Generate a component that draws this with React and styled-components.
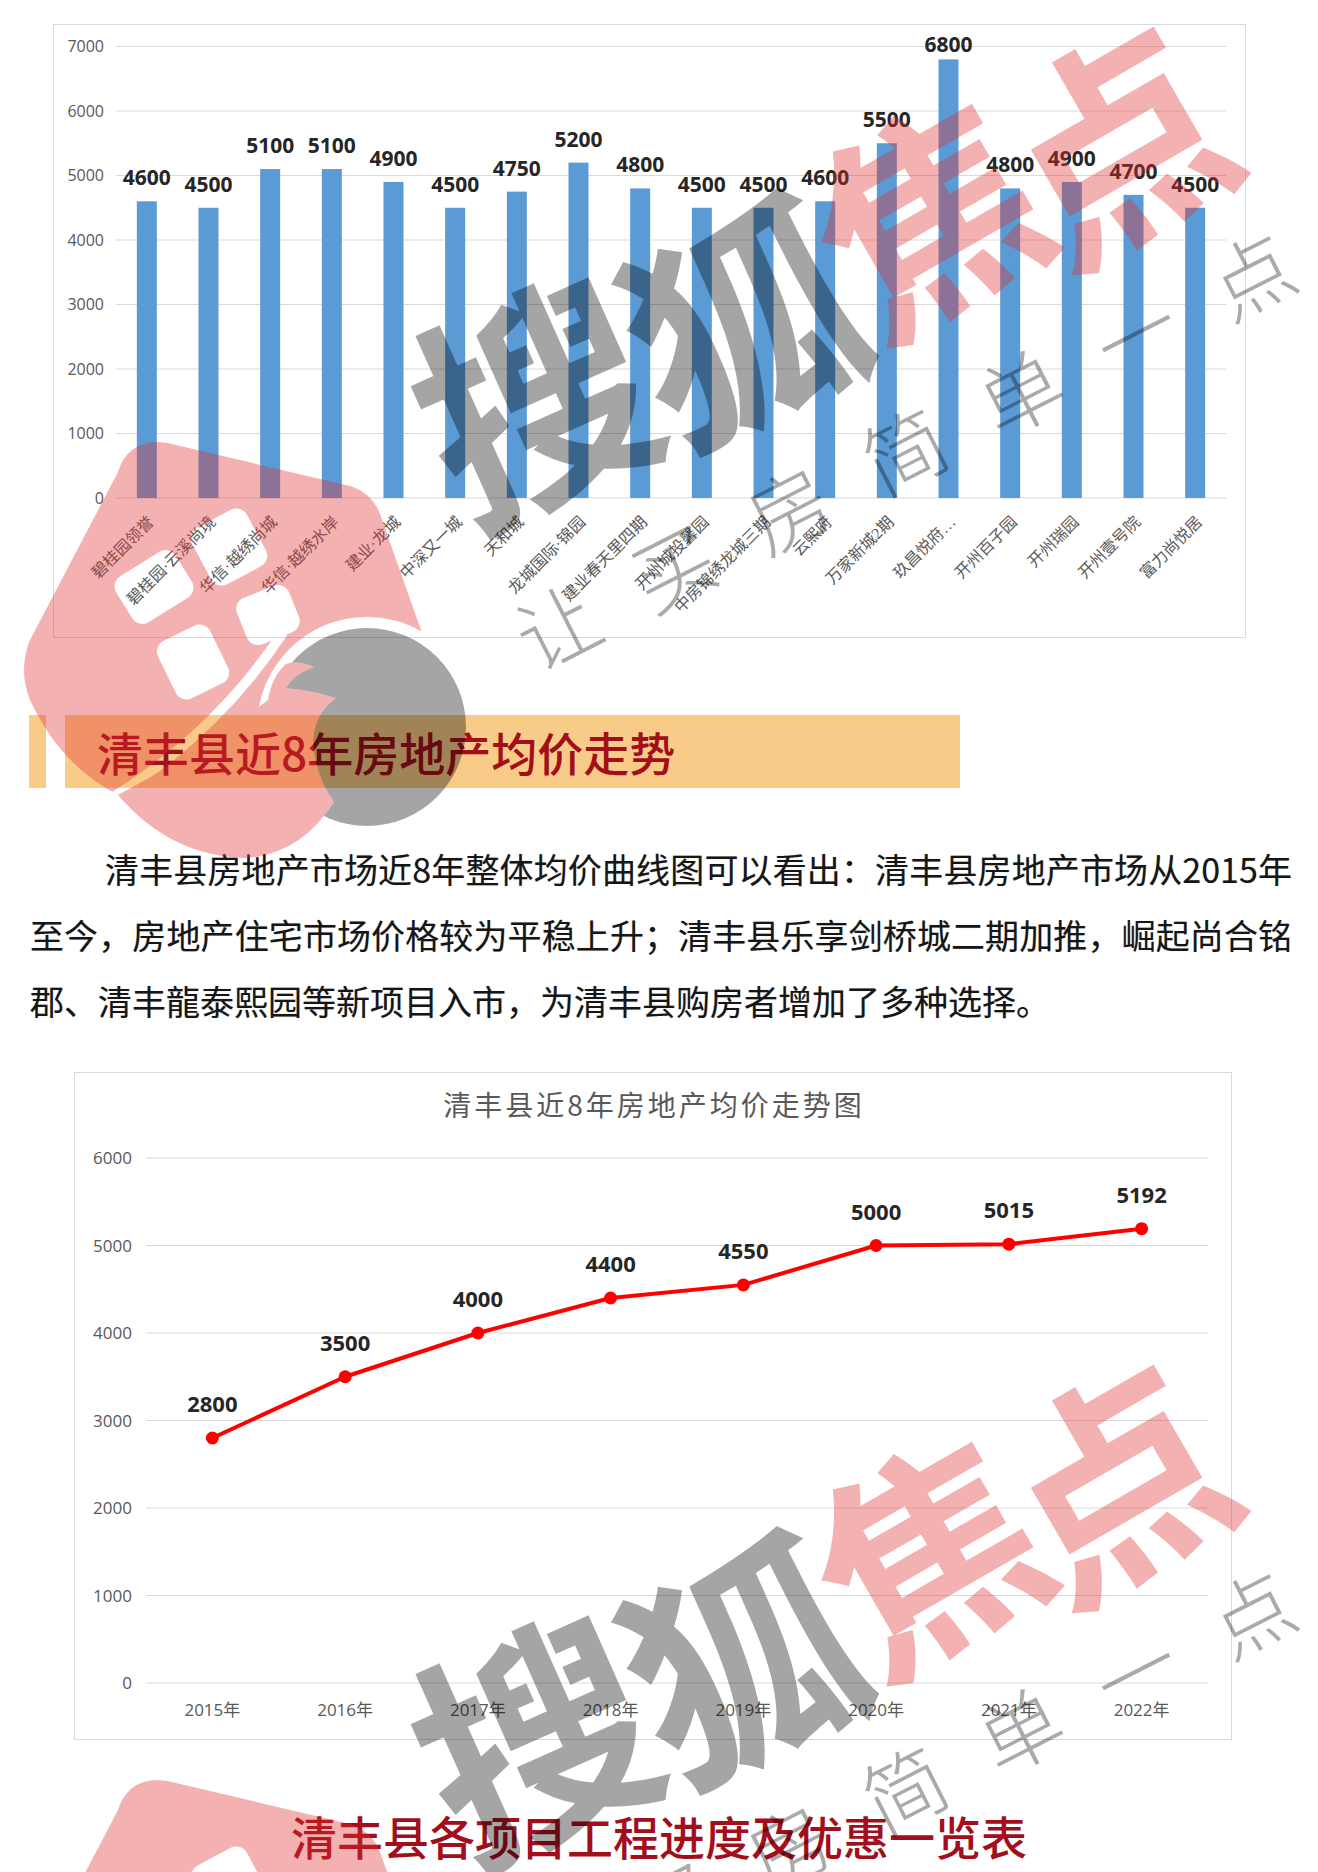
import React from "react";
import styled, { createGlobalStyle } from "styled-components";

const GlobalStyle = createGlobalStyle`
  html, body {
    margin: 0;
    padding: 0;
    background: #ffffff;
  }
  body {
    font-family: "Noto Sans CJK SC", "Open Sans", sans-serif;
    color: #1a1a1a;
  }
`;

const CJK = `"Noto Sans CJK SC", "Noto Sans", sans-serif`;
const NUM = `"Open Sans", "Noto Sans CJK SC", sans-serif`;

const Page = styled.div`
  position: relative;
  width: 1318px;
  height: 1872px;
  overflow: hidden;
  background: #fff;
`;

const ChartBox = styled.div`
  box-sizing: border-box;
  width: ${(p) => p.$w}px;
  height: ${(p) => p.$h}px;
  margin: ${(p) => p.$top}px 0 0 ${(p) => p.$left}px;
  border: 1px solid #d9d9d9;
  background: #fff;

  svg {
    display: block;
  }
`;

const GridLine = styled.line`
  stroke: #d9d9d9;
  stroke-width: 1;
`;

const TickText = styled.text`
  font-family: ${NUM};
  font-size: ${(p) => p.$size || 16}px;
  fill: #595959;
  text-anchor: ${(p) => p.$anchor || "end"};
`;

const CategoryText = styled.text`
  font-family: "Liberation Serif", "Noto Sans CJK SC", serif;
  font-size: 16px;
  fill: #595959;
  text-anchor: end;
`;

const ValueText = styled.text`
  font-family: ${NUM};
  font-weight: 700;
  font-size: ${(p) => p.$size || 21}px;
  fill: #262626;
  text-anchor: middle;
`;

const ChartTitle = styled.text`
  font-family: ${CJK};
  font-size: 28px;
  letter-spacing: 3px;
  fill: #595959;
  text-anchor: middle;
`;

const HeadingRow = styled.div`
  display: flex;
  gap: 19px;
  height: 73px;
  margin: 77px 0 0 29px;
`;

const HeadingStripe = styled.div`
  width: 17px;
  background: #f9cb89;
`;

const HeadingBar = styled.div`
  width: 895px;
  background: #f9cb89;
  display: flex;
  align-items: center;
  padding-left: 32px;
  box-sizing: border-box;
`;

const HeadingText = styled.h2`
  margin: 0;
  font-family: ${CJK};
  font-weight: 500;
  font-size: 46px;
  line-height: 55px;
  color: #a20e1b;
  text-align: ${(p) => p.$align || "left"};
`;

const Paragraph = styled.p`
  box-sizing: border-box;
  width: 1262px;
  margin: 48px 0 0 30px;
  font-family: ${CJK};
  font-size: 34px;
  line-height: 66px;
  text-indent: 75px;
  text-align: justify;
  color: #161616;
  text-shadow: 0 0 1px rgba(0, 0, 0, 0.3);
`;

const BottomHeading = styled.div`
  margin-top: 68px;
`;

const Overlay = styled.svg`
  position: absolute;
  left: 0;
  top: ${(p) => p.$top}px;
  pointer-events: none;
`;

const MarkText = styled.text`
  font-family: ${CJK};
  font-size: ${(p) => p.$size}px;
  font-weight: ${(p) => p.$weight};
  fill: ${(p) => p.$fill};
  opacity: ${(p) => p.$alpha};
  text-anchor: middle;
  dominant-baseline: central;
`;

const bars = [
  ["碧桂园领誉", 4600],
  ["碧桂园·云溪尚境", 4500],
  ["华信·越绣尚城", 5100],
  ["华信·越绣水岸", 5100],
  ["建业·龙城", 4900],
  ["中深又一城", 4500],
  ["天和城", 4750],
  ["龙城国际·锦园", 5200],
  ["建业春天里四期", 4800],
  ["开州城投馨园", 4500],
  ["中房锦绣龙城三期", 4500],
  ["云熙府", 4600],
  ["万家新城2期", 5500],
  ["玖昌悦府…", 6800],
  ["开州百子园", 4800],
  ["开州瑞园", 4900],
  ["开州壹号院", 4700],
  ["富力尚悦居", 4500],
];

const trend = [
  ["2015年", 2800],
  ["2016年", 3500],
  ["2017年", 4000],
  ["2018年", 4400],
  ["2019年", 4550],
  ["2020年", 5000],
  ["2021年", 5015],
  ["2022年", 5192],
];

const BarChart = () => {
  const left = 62;
  const width = 1110;
  const zero = 473;
  const scale = 451.5 / 7000;
  const step = width / bars.length;
  const ticks = [0, 1000, 2000, 3000, 4000, 5000, 6000, 7000];

  return (
    <ChartBox $w={1193} $h={614} $top={24} $left={53}>
      <svg width="1191" height="612">
        {ticks.map((t) => {
          const y = zero - t * scale;
          return (
            <g key={t}>
              <GridLine x1={left} x2={left + width} y1={y} y2={y} />
              <TickText x={50} y={y + 5.5}>
                {t}
              </TickText>
            </g>
          );
        })}
        {bars.map(([name, v], i) => {
          const cx = left + step * (i + 0.5);
          const top = zero - v * scale;
          return (
            <g key={name}>
              <rect x={cx - 10} y={top} width="20" height={zero - top} fill="#5b9bd5" />
              <ValueText x={cx} y={Math.max(top - 16, 27)}>
                {v}
              </ValueText>
              <CategoryText transform={`translate(${cx + 8} ${zero + 25}) rotate(-45)`}>
                {name}
              </CategoryText>
            </g>
          );
        })}
      </svg>
    </ChartBox>
  );
};

const LineChart = () => {
  const left = 71;
  const width = 1062;
  const zero = 610;
  const scale = 87.5 / 1000;
  const step = width / trend.length;
  const ticks = [0, 1000, 2000, 3000, 4000, 5000, 6000];
  const pts = trend.map(([, v], i) => [left + step * (i + 0.5), zero - v * scale]);

  return (
    <ChartBox $w={1158} $h={668} $top={38} $left={74}>
      <svg width="1156" height="666">
        <ChartTitle x={579} y={43}>
          清丰县近8年房地产均价走势图
        </ChartTitle>
        {ticks.map((t) => {
          const y = zero - t * scale;
          return (
            <g key={t}>
              <GridLine x1={left} x2={left + width} y1={y} y2={y} />
              <TickText x={57} y={y + 6} $size={17}>
                {t}
              </TickText>
            </g>
          );
        })}
        <polyline
          points={pts.map((p) => p.join(",")).join(" ")}
          fill="none"
          stroke="#ff0000"
          strokeWidth="4"
          strokeLinejoin="round"
        />
        {pts.map(([x, y], i) => (
          <g key={trend[i][0]}>
            <circle cx={x} cy={y} r="6.5" fill="#ff0000" />
            <ValueText x={x} y={y - 26} $size={22}>
              {trend[i][1]}
            </ValueText>
            <TickText x={x} y={643} $size={17} $anchor="middle">
              {trend[i][0]}
            </TickText>
          </g>
        ))}
      </svg>
    </ChartBox>
  );
};

// white windows of the logo: cx, cy, w, h, angle
const windows = [
  [154, 587, 70, 54, -32],
  [229, 547, 62, 64, -28],
  [193, 662, 58, 64, -26],
  [268, 615, 56, 50, -22],
];

const FLAME =
  "M118 795 Q205 748 268 700 Q272 676 286 664 Q298 660 314 667 Q294 674 286 688 Q310 690 336 698 Q314 714 313 742 Q315 775 334 802 Q300 855 245 858 Q170 856 118 795 Z";

const slogan = "让买房简单一点".split("");

const Watermark = ({ top, id }) => (
  <Overlay $top={top} width="1318" height="1338" viewBox="0 0 1318 1338">
    <defs>
      <mask id={`${id}-pink`}>
        <rect width="1318" height="1338" fill="white" />
        {windows.map(([x, y, w, h, a]) => (
          <rect
            key={`${x}-${y}`}
            x={-w / 2}
            y={-h / 2}
            width={w}
            height={h}
            rx="12"
            transform={`translate(${x} ${y}) rotate(${a})`}
            fill="black"
          />
        ))}
        <circle cx="367" cy="727" r="110" fill="black" />
        <path d="M282 634 Q215 735 106 802" fill="none" stroke="black" strokeWidth="10" strokeLinecap="round" />
      </mask>
      <mask id={`${id}-grey`}>
        <rect width="1318" height="1338" fill="white" />
        <path d={FLAME} fill="black" />
      </mask>
    </defs>

    <g opacity="0.37" fill="#e12f2f">
      <path
        mask={`url(#${id}-pink)`}
        d="M132 450 Q150 437 176 445 L350 486 Q372 493 380 514 L428 650 L330 760 L150 805 L118 795 Q60 765 30 700 Q18 670 30 640 L118 472 Q122 458 132 450 Z"
      />
      <path d={FLAME} />
    </g>
    <circle cx="367" cy="727" r="99" fill="#000" opacity="0.35" mask={`url(#${id}-grey)`} />

    <MarkText x="0" y="0" transform="translate(530 390) rotate(-24)" $size={232} $weight={700} $fill="#000" $alpha={0.35}>
      搜
    </MarkText>
    <MarkText x="0" y="0" transform="translate(738 312) rotate(-24)" $size={232} $weight={700} $fill="#000" $alpha={0.35}>
      狐
    </MarkText>
    <MarkText x="0" y="0" transform="translate(922 206) rotate(-30)" $size={220} $weight={700} $fill="#e12f2f" $alpha={0.37}>
      焦
    </MarkText>
    <MarkText x="0" y="0" transform="translate(1110 134) rotate(-30)" $size={220} $weight={700} $fill="#e12f2f" $alpha={0.37}>
      点
    </MarkText>
    {slogan.map((ch, i) => (
      <MarkText
        key={i}
        x="0"
        y="0"
        transform={`translate(${556 + i * 115.7} ${623 - i * 58.5}) rotate(-27)`}
        $size={82}
        $weight={300}
        $fill="#000"
        $alpha={0.33}
      >
        {ch}
      </MarkText>
    ))}
  </Overlay>
);

const App = () => (
  <Page>
    <GlobalStyle />
    <BarChart />
    <HeadingRow>
      <HeadingStripe />
      <HeadingBar>
        <HeadingText>清丰县近8年房地产均价走势</HeadingText>
      </HeadingBar>
    </HeadingRow>
    <Paragraph>
      清丰县房地产市场近8年整体均价曲线图可以看出：清丰县房地产市场从2015年至今，房地产住宅市场价格较为平稳上升；清丰县乐享剑桥城二期加推，崛起尚合铭郡、清丰龍泰熙园等新项目入市，为清丰县购房者增加了多种选择。
    </Paragraph>
    <LineChart />
    <BottomHeading>
      <HeadingText $align="center">清丰县各项目工程进度及优惠一览表</HeadingText>
    </BottomHeading>
    <Watermark top={0} id="wm1" />
    <Watermark top={1338} id="wm2" />
  </Page>
);

export default App;
